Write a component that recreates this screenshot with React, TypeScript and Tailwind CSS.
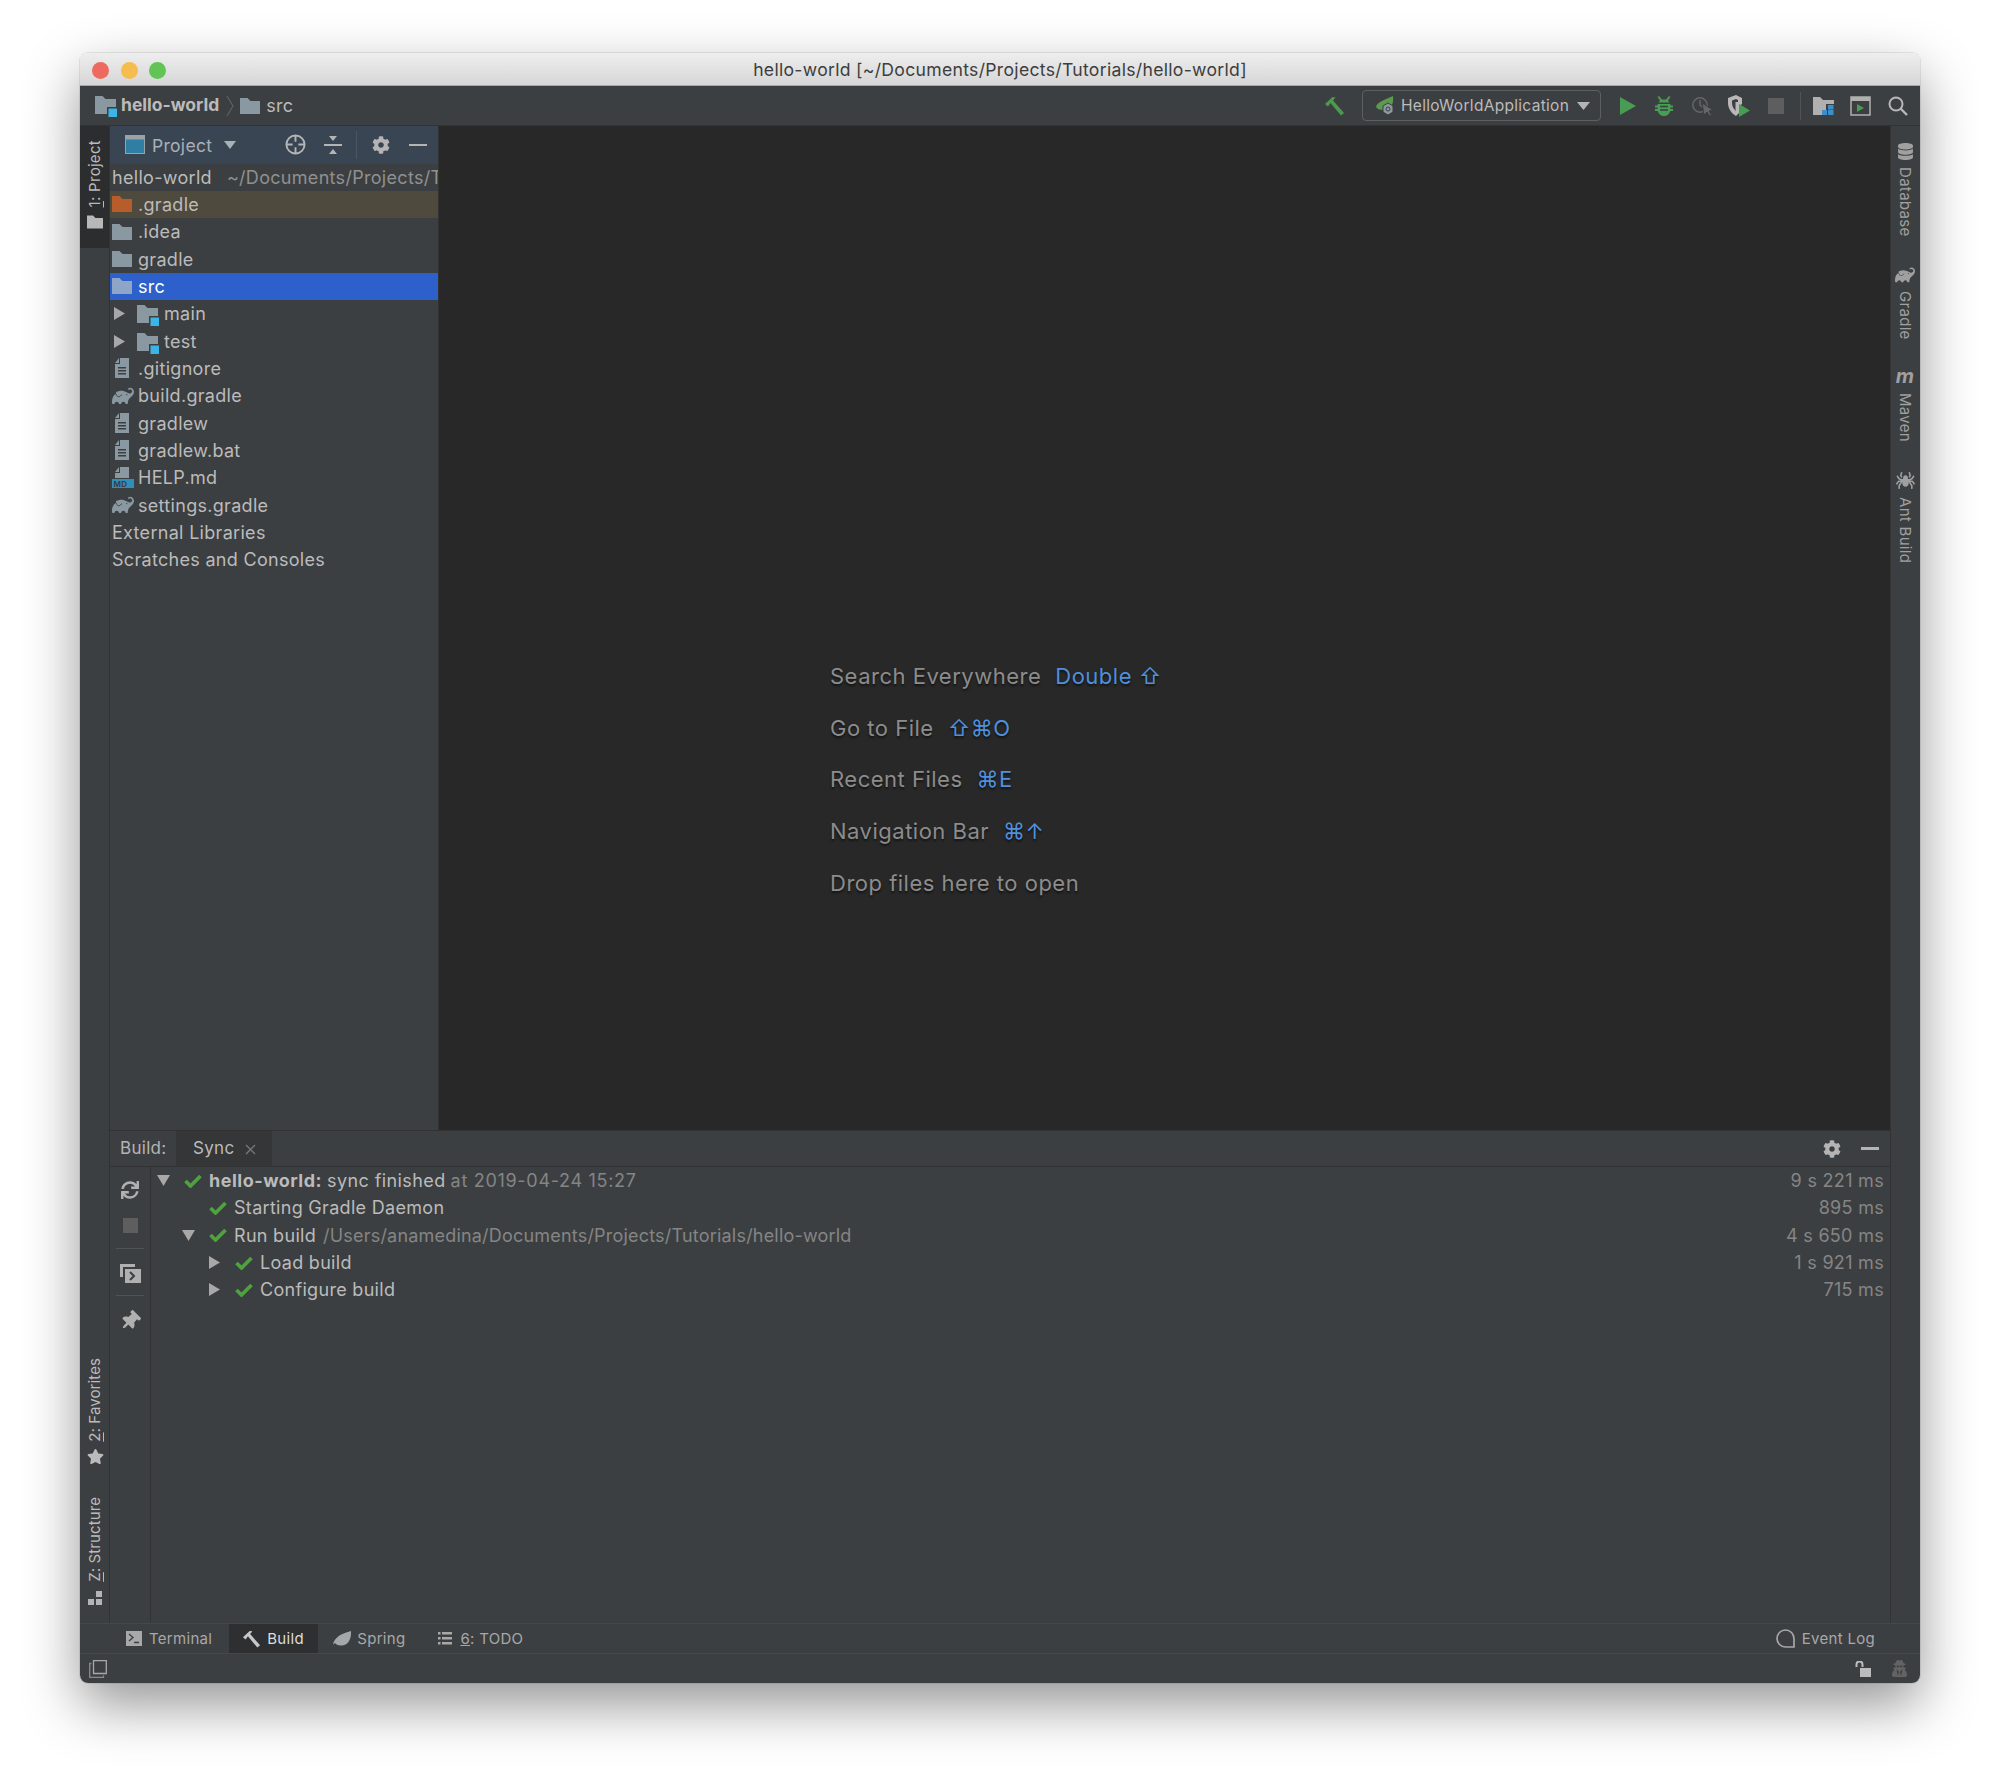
import { FaCog, FaDatabase, FaSpider, FaStar, FaSync, FaThumbtack, FaUserSecret } from "react-icons/fa"
import { SiGradle } from "react-icons/si"

const FOLDER = "#8a98a2"

function Folder({ color = FOLDER, className = "" }: { color?: string; className?: string }) {
  return (
    <svg viewBox="0 0 20 16" width="20" height="16" className={className}>
      <path d="M0 0h7.5l3 3H20v13H0z" fill={color} />
    </svg>
  )
}

function ModuleFolder({ className = "" }: { className?: string }) {
  return (
    <svg viewBox="0 0 22 22" width="22" height="22" className={className}>
      <path d="M0 1h7.5l3 3H21v8h-9v7H0z" fill={FOLDER} />
      <rect x="13.5" y="13.5" width="8.5" height="8.5" fill="#3db4e6" />
    </svg>
  )
}

function FileIcon({ className = "" }: { className?: string }) {
  return (
    <svg viewBox="0 0 16 20" width="16" height="20" className={className}>
      <path d="M6 0h9v20H1V6h5zM1 5l4-5v5z" fill={FOLDER} />
      <path d="M4 9h8v1.5H4zM4 12h8v1.5H4zM4 15h8v1.5H4z" fill="#3c3f41" />
    </svg>
  )
}

function MdIcon({ className = "" }: { className?: string }) {
  return (
    <svg viewBox="0 0 22 22" width="22" height="22" className={className}>
      <path d="M8 0h9v11H3V6h5zM3 5l4-5v5z" fill={FOLDER} />
      <rect x="0" y="12" width="22" height="9" fill="#2f8fb8" />
      <text x="1.5" y="19.6" fontSize="8" fontWeight="700" fill="#3c3f41" fontFamily="Inter">MD</text>
    </svg>
  )
}

function Triangle({ down = false, className = "" }: { down?: boolean; className?: string }) {
  return (
    <svg viewBox="0 0 13 13" width="13" height="13" className={className}>
      {down ? <path d="M0 1h13L6.5 12z" fill="#a8a8a8" /> : <path d="M1 0l11 6.5L1 13z" fill="#a8a8a8" />}
    </svg>
  )
}

function Check({ className = "" }: { className?: string }) {
  return (
    <svg viewBox="0 0 18 14" width="18" height="14" className={className}>
      <path d="M1.5 7l5 5L16.5 2" fill="none" stroke="#4fa33f" strokeWidth="3.6" />
    </svg>
  )
}

function Hammer({ color, className = "" }: { color: string; className?: string }) {
  return (
    <svg viewBox="0 0 21 20" width="21" height="20" className={className}>
      <path d="M1 8L8.5 1l3 .5-2.5 3 11 12.5-3 2.5L6.5 7 4 10.5z" fill={color} />
    </svg>
  )
}

function Leaf({ className = "" }: { className?: string }) {
  return (
    <svg viewBox="0 0 18 15" width="18" height="15" className={className}>
      <path d="M18 0c.5 7-2 15-10.500 14.500C5 14.500 3 13.500 2 12l-2 1.500C1 9 4 3.500 18 0z" fill="#a3a8ab" />
    </svg>
  )
}

function Minus({ className = "" }: { className?: string }) {
  return <div className={`h-[2.5px] w-[18px] bg-[#b4b4b4] ${className}`} />
}

function VerticalLabel({ hotkey, text, reverse = true, className = "" }: { hotkey?: string; text: string; reverse?: boolean; className?: string }) {
  return (
    <span className={`whitespace-nowrap text-[15px] leading-[18px] [writing-mode:vertical-rl] ${reverse ? "rotate-180" : ""} ${className}`}>
      {hotkey && <span className="underline">{hotkey}</span>}
      {text}
    </span>
  )
}

const tree = [
  { label: ".gradle", icon: "orange", bg: "bg-[#4f4a3e]" },
  { label: ".idea", icon: "folder" },
  { label: "gradle", icon: "folder" },
  { label: "src", icon: "selected", bg: "bg-[#2d60cb]", text: "text-white" },
  { label: "main", icon: "module" },
  { label: "test", icon: "module" },
  { label: ".gitignore", icon: "file" },
  { label: "build.gradle", icon: "gradle" },
  { label: "gradlew", icon: "file" },
  { label: "gradlew.bat", icon: "file" },
  { label: "HELP.md", icon: "md" },
  { label: "settings.gradle", icon: "gradle" },
]

function TreeRow({ label, icon, bg = "", text = "" }: { label: string; icon: string; bg?: string; text?: string }) {
  if (icon === "module") {
    return (
      <div className="flex h-[27.33px] items-center pl-[3px]">
        <Triangle />
        <ModuleFolder className="ml-[11px] mt-[3px]" />
        <span className="ml-[5px]">{label}</span>
      </div>
    )
  }
  return (
    <div className={`flex h-[27.33px] items-center pl-[2px] ${bg} ${text}`}>
      <span className="flex w-[22px] justify-start">
        {icon === "orange" && <Folder color="#b65d2b" />}
        {icon === "folder" && <Folder />}
        {icon === "selected" && <Folder color="#8ea5c8" />}
        {icon === "file" && <FileIcon className="ml-[2px]" />}
        {icon === "md" && <MdIcon className="mt-[1px]" />}
        {icon === "gradle" && <SiGradle size={22} color={FOLDER} />}
      </span>
      <span className="ml-[4px]">{label}</span>
    </div>
  )
}

const hints: { label: string; keys: string }[] = [
  { label: "Search Everywhere", keys: "Double ⇧" },
  { label: "Go to File", keys: "⇧⌘O" },
  { label: "Recent Files", keys: "⌘E" },
  { label: "Navigation Bar", keys: "⌘↑" },
]

const buildRows = [
  { pad: "pl-[58px]", arrow: false, name: "Starting Gradle Daemon", time: "895 ms" },
  { pad: "pl-[31px]", arrow: true, down: true, name: "Run build", path: "/Users/anamedina/Documents/Projects/Tutorials/hello-world", time: "4 s 650 ms" },
  { pad: "pl-[57px]", arrow: true, name: "Load build", time: "1 s 921 ms" },
  { pad: "pl-[57px]", arrow: true, name: "Configure build", time: "715 ms" },
]

export default function App() {
  return (
    <div className="h-[1790px] w-[2000px] overflow-hidden bg-white pl-[80px] pt-[53px] font-[Inter,'DejaVu_Sans',sans-serif] text-[18px] tracking-[0.3px] text-[#bbbbbb]">
      <div className="flex h-[1630px] w-[1840px] flex-col overflow-hidden rounded-[8px] shadow-[0_22px_55px_rgba(0,0,0,0.42),0_0_0_1px_rgba(0,0,0,0.08)]">
        {/* title bar */}
        <div className="relative flex h-[33px] shrink-0 items-center justify-center border-b border-[#a9a9a9] bg-gradient-to-b from-[#eeeeee] to-[#d6d6d6] pt-[3px] text-[17.600px] text-[#3d3d3d]">
          <div className="absolute left-[12px] top-[9px] flex gap-[11.500px]">
            <div className="h-[17px] w-[17px] rounded-full bg-[#ee6a5f]" />
            <div className="h-[17px] w-[17px] rounded-full bg-[#f5bd4f]" />
            <div className="h-[17px] w-[17px] rounded-full bg-[#61c454]" />
          </div>
          hello-world [~/Documents/Projects/Tutorials/hello-world]
        </div>

        {/* navigation bar */}
        <div className="flex h-[40px] shrink-0 items-center border-b border-[#323232] bg-[#3c3f41] pl-[15px] pr-[12px]">
          <ModuleFolder />
          <span className="ml-[4px] text-[17.500px] font-bold tracking-normal">hello-world</span>
          <svg viewBox="0 0 8 22" width="8" height="22" className="ml-[7px]">
            <path d="M1 1l6 10-6 10" fill="none" stroke="#5e6163" strokeWidth="1.200" />
          </svg>
          <Folder className="ml-[6px]" />
          <span className="ml-[6px]">src</span>

          <div className="ml-auto flex items-center">
            <Hammer color="#4c9a4c" />
            <div className="ml-[17px] flex h-[31px] w-[239px] items-center rounded-[4px] border border-[#5e6060] pl-[11px] text-[15.500px]">
              <svg viewBox="0 0 22 22" width="22" height="22">
                <path d="M19 1c1 8-2 14-10 14-3 0-6-1-7-3C3 7 10 5 19 1z" fill="#5c9a4e" />
                <path d="M14 8l5 3v6l-5 3-5-3v-6z" fill="#8d9aa3" stroke="#3c3f41" />
                <circle cx="14" cy="14" r="2" fill="none" stroke="#3c3f41" />
              </svg>
              <span className="ml-[5px]">HelloWorldApplication</span>
              <svg viewBox="0 0 13 8" width="13" height="8" className="ml-auto mr-[10px]">
                <path d="M0 0h13L6.500 8z" fill="#b4b4b4" />
              </svg>
            </div>
            <svg viewBox="0 0 16 18" width="16" height="18" className="ml-[19px]">
              <path d="M0 0l16 9-16 9z" fill="#499c54" />
            </svg>
            <svg viewBox="0 0 18 20" width="18" height="20" className="ml-[19px]">
              <path d="M4 0l3 3.500h4L14 0l1.500 1-2.500 3.500 1.500 2h-11L5 4.500 2.500 1z" fill="#499c54" />
              <path d="M2.500 8h13v1.500H18v2h-2.500V13H18v2h-2.700c-.8 3-3.300 5-6.300 5s-5.500-2-6.300-5H0v-2h2.500v-1.500H0v-2h2.500z" fill="#499c54" />
              <path d="M5 10.500h8M5 14h8" stroke="#3c3f41" strokeWidth="1.300" />
            </svg>
            <svg viewBox="0 0 22 20" width="22" height="20" className="ml-[19px]">
              <circle cx="8" cy="9" r="7.200" fill="none" stroke="#646668" strokeWidth="1.500" />
              <path d="M8 4v5l2 2" fill="none" stroke="#646668" strokeWidth="1.500" />
              <path d="M10 7l11 7-4 1 2.500 4-2 1-2.500-4-3 3z" fill="#646668" stroke="#3c3f41" />
            </svg>
            <svg viewBox="0 0 22 22" width="22" height="22" className="ml-[14px]">
              <path d="M0 3l8-3 6 3v6l-3 2v7l-3 3C3 18 0 13 0 8z" fill="#b8b8b8" />
              <path d="M4 5.500L8 4l2 1v2H7.500v7L8 16C5.500 14 4 11 4 8z" fill="#3c3f41" />
              <path d="M11 9l11 6.500L11 22z" fill="#499c54" />
            </svg>
            <div className="ml-[18px] h-[16px] w-[16px] bg-[#5e5e5e]" />
            <div className="ml-[16px] h-[28px] w-px bg-[#515355]" />
            <svg viewBox="0 0 21 20" width="21" height="20" className="ml-[12px]">
              <path d="M0 1h7l3 3h11v4h-8v11H0z" fill="#b0b0b0" />
              <path d="M15 9h5.500v4.500H15zM9 14h5v5H9zM15 14h5.500v5H15z" fill="#3d8fc9" />
            </svg>
            <svg viewBox="0 0 21 20" width="21" height="20" className="ml-[16px]">
              <rect x="1" y="1" width="19" height="18" fill="none" stroke="#b0b0b0" strokeWidth="1.500" />
              <rect x="1" y="1" width="19" height="4" fill="#b0b0b0" />
              <path d="M7 8l7 4-7 4z" fill="#499c54" />
            </svg>
            <svg viewBox="0 0 20 20" width="20" height="20" className="ml-[17px]">
              <circle cx="8" cy="8" r="6.500" fill="none" stroke="#b8b8b8" strokeWidth="2" />
              <path d="M12.500 12.500L19 19" stroke="#b8b8b8" strokeWidth="2.400" />
            </svg>
          </div>
        </div>

        {/* main area */}
        <div className="flex min-h-0 flex-1">
          {/* left stripe */}
          <div className="flex w-[30px] shrink-0 flex-col items-center justify-between border-r border-[#323232] bg-[#3c3f41] pb-[18px]">
            <div className="flex h-[122px] w-full flex-col items-center bg-[#2c2d2f] pl-[1px] pt-[14px]">
              <VerticalLabel hotkey="1" text=": Project" />
              <Folder className="mt-[8px] h-[14px] w-[16px]" color="#b8b8b8" />
            </div>
            <div className="flex flex-col items-center pl-[1px]">
              <VerticalLabel hotkey="2" text=": Favorites" className="tracking-[0.1px]" />
              <FaStar size={17} className="mt-[7px]" />
              <VerticalLabel hotkey="Z" text=": Structure" className="mt-[32px] tracking-[0.1px]" />
              <svg viewBox="0 0 14 14" width="14" height="14" className="mt-[9px]">
                <path d="M0 8h6v6H0zM8 8h6v6H8zM8 0h6v6H8z" fill="#b4b4b4" />
              </svg>
            </div>
          </div>

          <div className="flex min-w-0 flex-1 flex-col">
            {/* project + editor */}
            <div className="flex h-[1004px] shrink-0">
              <div className="w-[329px] shrink-0 overflow-hidden whitespace-nowrap border-r border-[#323232] bg-[#3c3f41]">
                <div className="flex h-[37.500px] items-center bg-[#3a4553] pl-[15px] pr-[11px]">
                  <svg viewBox="0 0 20 19" width="20" height="19">
                    <rect x="0.500" y="0.500" width="19" height="18" fill="#2f7ea3" stroke="#9aa2a8" />
                    <rect x="1" y="1" width="18" height="3.500" fill="#9aa2a8" />
                  </svg>
                  <span className="ml-[7px] pt-[2px] text-[17.500px] text-[#a9b0b6]">Project</span>
                  <svg viewBox="0 0 12 8" width="12" height="8" className="ml-[12px]">
                    <path d="M0 0h12L6 8z" fill="#a9b0b6" />
                  </svg>
                  <div className="ml-auto flex items-center">
                    <svg viewBox="0 0 22 22" width="21" height="21">
                      <circle cx="11" cy="11" r="9.500" fill="none" stroke="#b4b4b4" strokeWidth="2" />
                      <path d="M11 1v7M11 14v7M1 11h7M14 11h7" stroke="#b4b4b4" strokeWidth="2" />
                    </svg>
                    <svg viewBox="0 0 18 18" width="18" height="18" className="ml-[18px]">
                      <path d="M0 8h18v2H0zM5 0h8L9 5zM5 18h8l-4-5z" fill="#b4b4b4" />
                    </svg>
                    <div className="ml-[14px] h-[28px] w-px bg-[#4c5560]" />
                    <FaCog size={18} className="ml-[15px] text-[#b4b4b4]" />
                    <Minus className="ml-[19px]" />
                  </div>
                </div>
                <div className="flex h-[27.33px] items-center pl-[2px]">
                  hello-world
                  <span className="ml-[15px] text-[#909090]">~/Documents/Projects/T</span>
                </div>
                {tree.map((row) => (
                  <TreeRow key={row.label} {...row} />
                ))}
                <div className="flex h-[27.33px] items-center pl-[2px]">External Libraries</div>
                <div className="flex h-[27.33px] items-center pl-[2px]">Scratches and Consoles</div>
              </div>

              {/* editor placeholder */}
              <div className="min-w-0 flex-1 bg-[#282828] pl-[391px] pt-[525px] text-[22px] tracking-[0.5px] text-[#8c8c8c] [text-shadow:0_2px_2px_#141414]">
                <div className="flex flex-col">
                  {hints.map((hint) => (
                    <div key={hint.label} className="flex h-[51.600px] items-center">
                      <span>{hint.label}</span>
                      <span className="ml-[14px] text-[#4f8fdc]">{hint.keys}</span>
                    </div>
                  ))}
                  <div className="flex h-[51.600px] items-center">Drop files here to open</div>
                </div>
              </div>
            </div>

            {/* build tool window */}
            <div className="flex min-h-0 flex-1 flex-col whitespace-nowrap border-t border-[#323232] bg-[#3c3f41]">
              <div className="flex h-[36px] shrink-0 items-center border-b border-[#323232] pl-[10px] pr-[11px]">
                <span className="w-[56px] pt-[1px] text-[17px] text-[#b4b4b4]">Build:</span>
                <div className="flex h-full w-[96px] items-center bg-[#343638] pl-[17px] pt-[1px] text-[17px]">
                  Sync
                  <svg viewBox="0 0 11 11" width="11" height="11" className="ml-[11px]">
                    <path d="M1 1l9 9M10 1l-9 9" stroke="#77797b" strokeWidth="1.300" />
                  </svg>
                </div>
                <FaCog size={18} className="ml-auto text-[#b4b4b4]" />
                <Minus className="ml-[20px]" />
              </div>
              <div className="flex min-h-0 flex-1">
                <div className="flex w-[41px] shrink-0 flex-col items-center border-r border-[#323232] pt-[14px]">
                  <FaSync size={18} className="text-[#b0b0b0]" />
                  <div className="mt-[19px] h-[15px] w-[15px] bg-[#5e5e5e]" />
                  <div className="mt-[15px] h-px w-[28px] bg-[#515355]" />
                  <svg viewBox="0 0 21 19" width="21" height="19" className="mt-[15px]">
                    <path d="M0 0h15v3H3v10H0z" fill="#b0b0b0" />
                    <path d="M5 5h16v14H5z" fill="#b0b0b0" />
                    <path d="M10 8l4 4-4 4" fill="none" stroke="#3c3f41" strokeWidth="2" />
                  </svg>
                  <div className="mt-[12px] h-px w-[28px] bg-[#515355]" />
                  <FaThumbtack size={20} className="mt-[15px] rotate-45 text-[#b0b0b0]" />
                </div>
                <div className="min-w-0 flex-1 pr-[6px]">
                  <div className="flex h-[27.33px] items-center pl-[6px]">
                    <Triangle down />
                    <Check className="ml-[14px]" />
                    <span className="ml-[7px] font-bold tracking-[0.5px]">hello-world:</span>
                    <span className="ml-[5px] tracking-[0.4px]">sync finished</span>
                    <span className="ml-[5px] tracking-[0.7px] text-[#858585]">at 2019-04-24 15:27</span>
                    <span className="ml-auto text-[#858585]">9 s 221 ms</span>
                  </div>
                  {buildRows.map((row) => (
                    <div key={row.name} className={`flex h-[27.33px] items-center ${row.pad}`}>
                      {row.arrow && <Triangle down={row.down} />}
                      <Check className={row.arrow ? "ml-[14px]" : ""} />
                      <span className="ml-[7px]">{row.name}</span>
                      {row.path && <span className="ml-[7px] tracking-[0.2px] text-[#858585]">{row.path}</span>}
                      <span className="ml-auto text-[#858585]">{row.time}</span>
                    </div>
                  ))}
                </div>
              </div>
            </div>
          </div>

          {/* right stripe */}
          <div className="flex w-[30px] shrink-0 flex-col items-center border-l border-[#323232] bg-[#3c3f41] pr-[1px] pt-[17px] text-[#a0a0a0]">
            <FaDatabase size={17} />
            <VerticalLabel text="Database" reverse={false} className="mt-[7px]" />
            <SiGradle size={20} className="mt-[29px]" />
            <VerticalLabel text="Gradle" reverse={false} className="mt-[6px]" />
            <span className="mt-[28px] text-[20px] font-bold italic leading-[16px]">m</span>
            <VerticalLabel text="Maven" reverse={false} className="mt-[9px]" />
            <FaSpider size={19} className="mt-[29px]" />
            <VerticalLabel text="Ant Build" reverse={false} className="mt-[7px]" />
          </div>
        </div>

        {/* tool window tabs */}
        <div className="flex h-[31px] shrink-0 items-center border-y border-[#4a4644] bg-[#3c3f41] text-[15px] text-[#a8a8a8]">
          <svg viewBox="0 0 16 15" width="16" height="15" className="ml-[46px]">
            <path d="M0 0h16v15H0z" fill="#a8a8a8" />
            <path d="M3 3l4 3.500L3 10M8 11.500h5" fill="none" stroke="#3c3f41" strokeWidth="1.400" />
          </svg>
          <span className="ml-[7px] pt-[1px]">Terminal</span>
          <div className="ml-[17px] flex h-full w-[89px] items-center bg-[#2d2f30] pl-[13px] text-[#dddddd]">
            <Hammer color="#c8c8c8" className="h-[18px] w-[19px]" />
            <span className="ml-[6px] pt-[1px]">Build</span>
          </div>
          <Leaf className="ml-[15px]" />
          <span className="ml-[6px] pt-[1px]">Spring</span>
          <svg viewBox="0 0 14 13" width="14" height="13" className="ml-[33px]">
            <path d="M0 0h2.500v2.500H0zM0 5h2.500v2.500H0zM0 10h2.500v2.500H0zM4 0h10v2.500H4zM4 5h10v2.500H4zM4 10h10v2.500H4z" fill="#a8a8a8" />
          </svg>
          <span className="ml-[8px] pt-[1px]">
            <span className="underline">6</span>: TODO
          </span>
          <svg viewBox="0 0 19 19" width="19" height="19" className="ml-auto">
            <path d="M18 18H9.500a8.500 8.500 0 1 1 8.500-8.500z" fill="none" stroke="#a8a8a8" strokeWidth="1.700" />
          </svg>
          <span className="ml-[7px] mr-[45px] pt-[1px]">Event Log</span>
        </div>

        {/* status bar */}
        <div className="flex h-[29px] shrink-0 items-center bg-[#3c3f41] pl-[9px] pr-[12px]">
          <svg viewBox="0 0 18 18" width="18" height="18">
            <path d="M4.500 .7h12.800v12.800H4.500z" fill="none" stroke="#a8a8a8" strokeWidth="1.300" />
            <path d="M2.500 3.500H.7v13.800h13.800v-1.800" fill="none" stroke="#8a8a8a" strokeWidth="1.300" />
          </svg>
          <svg viewBox="0 0 16 16" width="16" height="16" className="ml-auto">
            <path d="M1.500 6V3.500a3 3 0 0 1 6 0V6" fill="none" stroke="#bcbcbc" strokeWidth="2" />
            <path d="M5 7h11v9H5z" fill="#bcbcbc" />
          </svg>
          <FaUserSecret size={17} className="ml-[20px] text-[#636363]" />
        </div>
      </div>
    </div>
  )
}
